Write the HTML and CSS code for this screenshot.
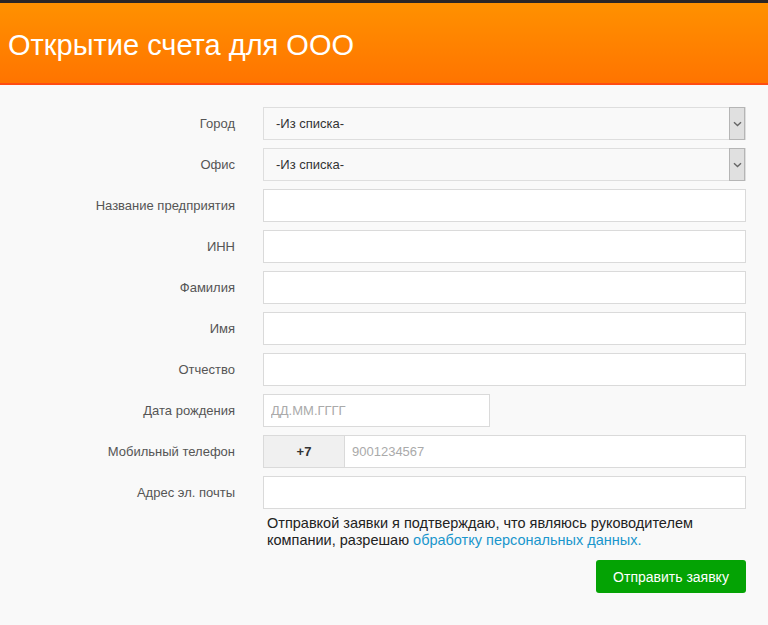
FILE: index.html
```html
<!DOCTYPE html>
<html lang="ru">
<head>
<meta charset="utf-8">
<title>Открытие счета для ООО</title>
<link rel="stylesheet" href="styles.css">
</head>
<body>
<header class="header">
  <h1 class="title">Открытие счета для ООО</h1>
</header>
<main class="form">
  <div class="row">
    <label class="label">Город</label>
    <div class="select"><span class="select-text">-Из списка-</span><span class="select-arrow"><svg width="9" height="6" viewBox="0 0 9 6"><path d="M1 1.2 L4.5 4.5 L8 1.2" fill="none" stroke="#666" stroke-width="1.4"/></svg></span></div>
  </div>
  <div class="row">
    <label class="label">Офис</label>
    <div class="select"><span class="select-text">-Из списка-</span><span class="select-arrow"><svg width="9" height="6" viewBox="0 0 9 6"><path d="M1 1.2 L4.5 4.5 L8 1.2" fill="none" stroke="#666" stroke-width="1.4"/></svg></span></div>
  </div>
  <div class="row">
    <label class="label">Название предприятия</label>
    <input class="input" type="text">
  </div>
  <div class="row">
    <label class="label">ИНН</label>
    <input class="input" type="text">
  </div>
  <div class="row">
    <label class="label">Фамилия</label>
    <input class="input" type="text">
  </div>
  <div class="row">
    <label class="label">Имя</label>
    <input class="input" type="text">
  </div>
  <div class="row">
    <label class="label">Отчество</label>
    <input class="input" type="text">
  </div>
  <div class="row">
    <label class="label">Дата рождения</label>
    <input class="input input-date" type="text" placeholder="ДД.ММ.ГГГГ">
  </div>
  <div class="row">
    <label class="label">Мобильный телефон</label>
    <div class="phone"><span class="phone-prefix">+7</span><input class="input phone-input" type="text" placeholder="9001234567"></div>
  </div>
  <div class="row">
    <label class="label">Адрес эл. почты</label>
    <input class="input" type="text">
  </div>
  <div class="row row-note">
    <span></span>
    <p class="note">Отправкой заявки я подтверждаю, что являюсь руководителем компании, разрешаю <a class="link" href="#">обработку персональных данных.</a></p>
  </div>
  <div class="row row-submit">
    <span></span>
    <div class="actions"><button class="btn" type="button">Отправить заявку</button></div>
  </div>
</main>
</body>
</html>
```
FILE: styles.css
```css
html, body {
  margin: 0;
  padding: 0;
  background: #f9f9f9;
  font-family: "Liberation Sans", Arial, sans-serif;
}
.header {
  border-top: 3px solid #2a2626;
  background: linear-gradient(#ff9100, #ff7400);
  border-bottom: 2px solid #ff4d12;
  height: 80px;
  box-sizing: content-box;
}
.title {
  margin: 0;
  padding: 26px 0 0 8px;
  font-size: 29px;
  line-height: 33px;
  font-weight: normal;
  color: #fff;
}
.form {
  padding-top: 22px;
  display: grid;
  row-gap: 8px;
}
.row {
  display: grid;
  grid-template-columns: 235px 483px;
  column-gap: 28px;
  align-items: center;
}
.label {
  text-align: right;
  font-size: 13px;
  color: #555;
}
.input {
  box-sizing: border-box;
  height: 33px;
  margin: 0;
  border: 1px solid #dadada;
  background: #fff;
  padding: 0 7px;
  font-family: inherit;
  font-size: 13px;
  color: #333;
  outline: none;
}
.input::placeholder {
  color: #aaa;
}
.input-date {
  width: 227px;
}
.select {
  box-sizing: border-box;
  height: 33px;
  display: flex;
  align-items: center;
  border: 1px solid #dedede;
  background: #f9f9f9;
}
.select-text {
  flex: 1;
  padding-left: 12px;
  font-size: 13px;
  color: #333;
}
.select-arrow {
  align-self: stretch;
  margin: -1px 0 -1px 0;
  width: 16px;
  box-sizing: border-box;
  border: 1px solid #b5b5b5;
  background: #e0e0e0;
  display: flex;
  align-items: center;
  justify-content: center;
}
.phone {
  display: flex;
  height: 33px;
}
.phone-prefix {
  box-sizing: border-box;
  width: 81px;
  border: 1px solid #dadada;
  border-right: none;
  background: #f0f0f0;
  display: flex;
  align-items: center;
  justify-content: center;
  font-size: 13px;
  font-weight: bold;
  color: #333;
}
.phone-input {
  flex: 1;
  min-width: 0;
}
.row-note {
  margin-top: -2px;
}
.note {
  margin: 0;
  padding-left: 4px;
  font-size: 14.5px;
  line-height: 17px;
  color: #222;
}
.link {
  color: #1a96cc;
  text-decoration: none;
}
.row-submit {
  margin-top: 3px;
}
.actions {
  display: flex;
  justify-content: flex-end;
}
.btn {
  width: 150px;
  height: 33px;
  border: none;
  border-radius: 3px;
  background: #04a304;
  color: #fff;
  font-family: inherit;
  font-size: 14px;
  cursor: pointer;
}
```
